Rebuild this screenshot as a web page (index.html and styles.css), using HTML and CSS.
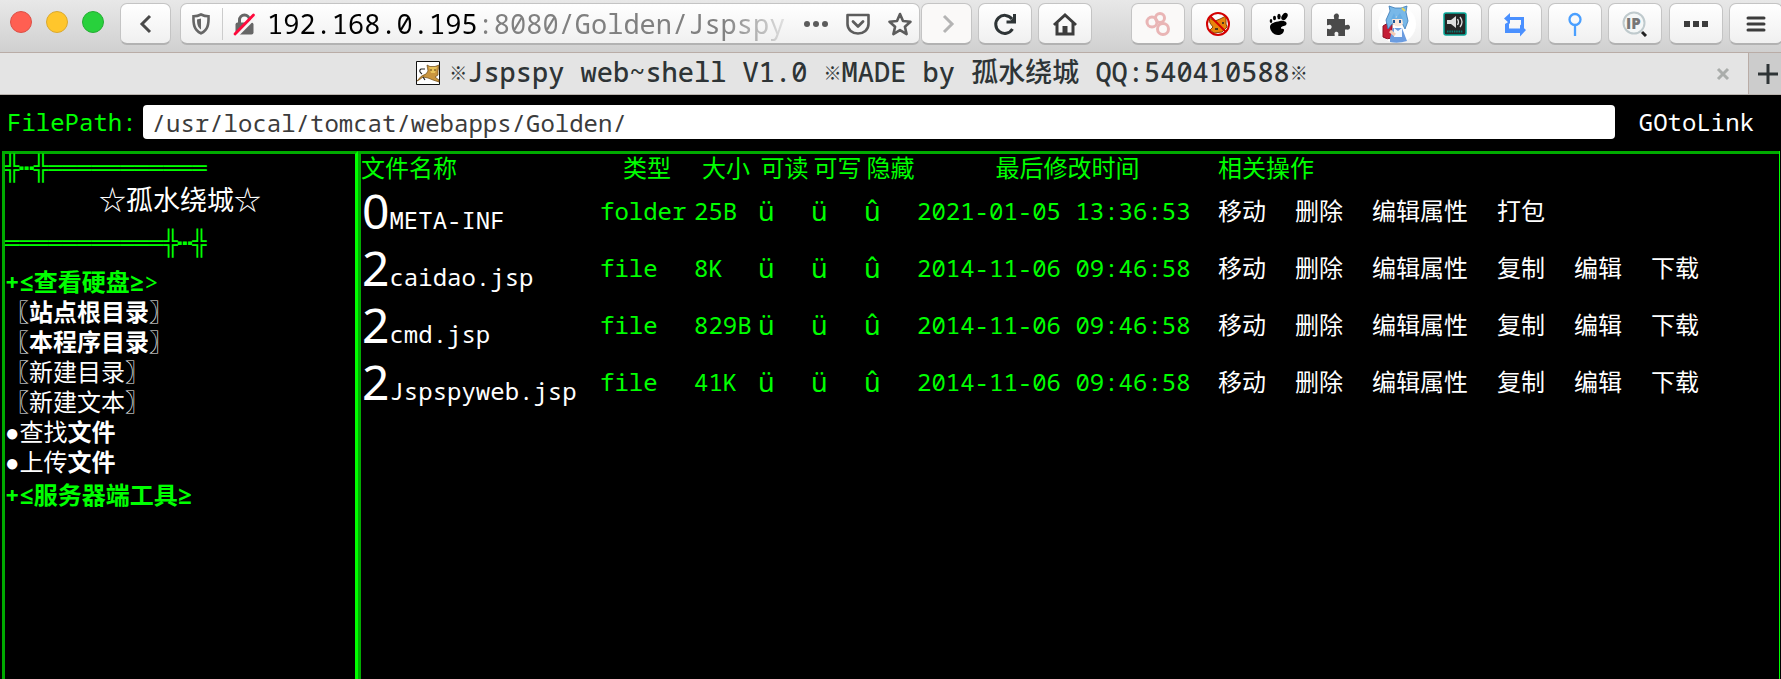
FILE: index.html
```html
<!DOCTYPE html>
<html lang="zh-CN">
<head>
<meta charset="utf-8">
<title>※Jspspy web~shell V1.0 ※MADE by 孤水绕城 QQ:540410588※</title>
<link rel="stylesheet" href="styles.css">
</head>
<body>
<header class="toolbar">
  <div class="lights"><span class="light red"></span><span class="light yellow"></span><span class="light green"></span></div>
  <button class="btn back" aria-label="Back"><svg width="24" height="24" viewBox="0 0 24 24"><path d="M16 4 8 12l8 8" fill="none" stroke="#4a4a4a" stroke-width="3"/></svg></button>
  <div class="urlbar">
    <button class="plain" aria-label="Protection"><svg width="20" height="22" viewBox="0 0 20 22"><path d="M10 1.5C13 3 15.500 3.300 17.500 3.300 17.800 11 17 17 10 20.300 3 17 2.200 11 2.500 3.300 4.500 3.300 7 3 10 1.500Z" fill="none" stroke="#666" stroke-width="2.600"/><path d="M10 5.500v11C7 14.500 6 12 6 6.500Z" fill="#666"/></svg></button>
    <span class="divider"></span>
    <button class="plain lock" aria-label="Connection not secure"><svg width="24" height="24" viewBox="0 0 24 24"><path d="M6.500 11V8a5 5 0 0 1 10 0v3" fill="none" stroke="#666" stroke-width="3"/><rect x="2.500" y="10.500" width="18" height="12" rx="2" fill="#666"/><path d="M3.500 24 23.500 4" stroke="#f5f5f5" stroke-width="3"/><path d="M2 22 20.500 3" stroke="#ff0a3c" stroke-width="2.800" stroke-linecap="round"/></svg></button>
    <div class="url" role="textbox" aria-label="Address" contenteditable="true" spellcheck="false"><span class="host">192.168.0.195</span>:8080/Golden/Jspspy</div>
    <button class="plain" aria-label="Page actions"><svg width="26" height="24" viewBox="0 0 26 24" fill="#5c5c5c"><circle cx="4" cy="12" r="3"/><circle cx="13" cy="12" r="3"/><circle cx="22" cy="12" r="3"/></svg></button>
    <button class="plain pocket" aria-label="Save to Pocket"><svg width="26" height="24" viewBox="0 0 26 24" fill="none" stroke="#5c5c5c"><path d="M2.500 3h21v9c0 6-5 9.500-10.500 9.500S2.500 18 2.500 12Z" stroke-width="2.600" stroke-linejoin="round"/><path d="m8 9.500 5 5 5-5" stroke-width="2.800" stroke-linecap="round" stroke-linejoin="round"/></svg></button>
    <button class="plain" aria-label="Bookmark"><svg width="26" height="26" viewBox="0 0 26 26"><path d="m13 3 3 7 7.500.7-5.600 5 1.700 7.400-6.600-4-6.600 4 1.700-7.400-5.600-5L10 10Z" fill="none" stroke="#5c5c5c" stroke-width="2.600" stroke-linejoin="round"/></svg></button>
  </div>
  <button class="btn forward dim" aria-label="Forward"><svg width="24" height="24" viewBox="0 0 24 24"><path d="m9 4 8 8-8 8" fill="none" stroke="#b4b4b4" stroke-width="3"/></svg></button>
  <div class="group">
    <button class="btn" aria-label="Reload"><svg width="24" height="24" viewBox="0 0 24 24"><path d="M19.500 17A9 9 0 1 1 19 7" fill="none" stroke="#2e3436" stroke-width="3"/><path d="M23 2v9.500h-9.500v-3h4L20 6V2Z" fill="#2e3436"/></svg></button>
    <button class="btn" aria-label="Home"><svg width="26" height="24" viewBox="0 0 26 24"><path d="M2 13 13 3l11 10" fill="none" stroke="#3c3c3c" stroke-width="3"/><path d="M5 11v11h16V11" fill="none" stroke="#3c3c3c" stroke-width="3"/><path d="M10.500 14h5v8h-5z" fill="#3c3c3c"/></svg></button>
  </div>
  <div class="group extensions">
    <button class="btn dim" aria-label="Containers"><svg width="26" height="26" viewBox="0 0 26 26" fill="none" stroke="#e9b5b5" stroke-width="3"><circle cx="7" cy="11" r="5"/><circle cx="15" cy="7" r="4.500"/><circle cx="18" cy="18" r="5.500"/></svg></button>
    <button class="btn" aria-label="Fox blocker"><svg width="26" height="26" viewBox="0 0 26 26"><path d="M4 7l6 3 5-2 6-3v8l1 3-5 5-8 1-4-3 3-3-3-4Z" fill="#e8850c" stroke="#8a4a08"/><path d="M10 18h3M17 12h2" stroke="#222" stroke-width="1.500"/><circle cx="13" cy="13" r="11" fill="none" stroke="#d40000" stroke-width="2"/><path d="m5 5 16 16" stroke="#d40000" stroke-width="2"/></svg></button>
    <button class="btn" aria-label="Gnome"><svg width="26" height="26" viewBox="0 0 26 26"><path d="M15 10c5-1 8 2 6 4-1.500 1.500-5 1-5 3 0 1.500 3 0 3 2 0 3-3 5-6 5-5 0-8-5-8-8 0-4 5-5 10-6Z"/><ellipse cx="19.500" cy="5.500" rx="2.600" ry="4" transform="rotate(35 19.500 5.500)"/><ellipse cx="14" cy="5.500" rx="1.700" ry="2.700"/><ellipse cx="9.500" cy="7" rx="1.500" ry="2.300"/><ellipse cx="6" cy="10" rx="1.300" ry="2"/></svg></button>
    <button class="btn" aria-label="Add-ons"><svg width="26" height="26" viewBox="0 0 26 26"><path d="M2 8h7c.8-1-.8-2 0-4 1.300-2.200 4.200-2 4.800 0 .6 1.800-.8 3 0 4H20v6c1 .8 2-.8 3.700 0 2 1.200 1.600 4-.2 4.500-1.500.5-2.500-.5-3.500.2V25h-6.500c-.8-1 .4-2-.3-3.300-1-1.300-3-1-3.600.3-.5 1.200.5 2 0 3H2v-7c1-.8 2 .7 3.500 0 1.700-1.200 1.400-3.300 0-4-1.500-.6-2.500.6-3.500 0Z" fill="#4a4a4a"/></svg></button>
    <button class="btn avatar" aria-label="Profile"><svg width="38" height="38" viewBox="0 0 38 38"><circle cx="19" cy="19" r="19" fill="#fff"/><path d="M5 21q4-4 9-2v14q-5 2-9-1Z" fill="#c51d35" stroke="#8d1426"/><path d="m12 33 3-10h9l5 13q-9 3-17 1Z" fill="#6b9ce0"/><path d="M12 6 11 1l6 2h6l6-2-1 6 2 9-3 8-3-6-10 1-4 5-2-9Z" fill="#78b8e8" stroke="#3b78b5" stroke-width=".8"/><path d="M14 13q5-3 10 0l1 6q-5 5-10 0Z" fill="#fbe6d8"/><path d="m13 14 3-6 2 5 4-5 3 6" fill="#68aee4"/><path d="M16 15v3M22 15v3" stroke="#245796" stroke-width="2"/><path d="m16 23 4 3 4-3v9h-8Z" fill="#f2f7ff"/><path d="m12 26 5 4" stroke="#f3cbb5" stroke-width="3"/><path d="m24 3 3 3" stroke="#e7d75c" stroke-width="2"/></svg></button>
    <button class="btn" aria-label="Audio booster"><svg width="24" height="24" viewBox="0 0 24 24"><rect x="1" y="1" width="22" height="22" rx="2" fill="#252525" stroke="#08a99a" stroke-width="1.500"/><path d="M4 8h4l5-4v12l-5-4H4Z" fill="#ddd"/><path d="M14.500 7q2 3 0 6M17 5q4 5 0 10" fill="none" stroke="#ddd" stroke-width="1.300"/><path d="M4 19.500h16" stroke="#087a72" stroke-width="2" stroke-dasharray="1.500 .8"/></svg></button>
    <button class="btn" aria-label="Proxy switch"><svg width="24" height="26" viewBox="0 0 24 26" fill="#4a90ff"><path d="M1 7.500 7 2v4h14v11h-3V9H7v4Z"/><path d="m23 19-6-5.500v4H6v-7L2 13v9h15v3.500Z"/></svg></button>
    <button class="btn" aria-label="Pin"><svg width="24" height="26" viewBox="0 0 24 26" fill="none" stroke="#4a9fff" stroke-width="2.300"><circle cx="12" cy="8.500" r="5.500"/><path d="M12 14v11"/></svg></button>
    <button class="btn" aria-label="IP lookup"><svg width="26" height="26" viewBox="0 0 26 26"><circle cx="12" cy="12" r="10.500" fill="#f4f7f7" stroke="#bfcacd" stroke-width="2"/><text class="ip" x="4" y="18">IP</text><path d="m20 21 4 4" stroke="#222" stroke-width="3"/></svg></button>
    <button class="btn more" aria-label="More tools"><svg width="26" height="24" viewBox="0 0 26 24" fill="#3c3c3c"><path d="M1 9h6v6H1zM10 9h6v6h-6zM19 9h6v6h-6z"/></svg></button>
    <button class="btn" aria-label="Menu"><svg width="20" height="20" viewBox="0 0 20 20"><path d="M2 4h16M2 10h16M2 16h16" stroke="#3c3c3c" stroke-width="3" stroke-linecap="round"/></svg></button>
  </div>
</header>
<nav class="tabs">
  <div class="tab">
    <svg width="24" height="24" viewBox="0 0 24 24"><path d="M.5.5h23v23H.5z" fill="#fff" stroke="#111"/><path d="M1 20q4-6 9-7l2-3-1-6 3 1.500h5l4-1.500-1 6v4l-3 2 4 3v2l-6-2-5-2-5-1-4 3Z" fill="#c9953f" stroke="#6b4a17" stroke-width=".7"/><path d="m13 6 2 6h4l2-6" fill="#e8c25b"/><path d="M15 8v2M19 8v2" stroke="#5a3c10"/><path d="M6 13q-4-3-1-5h4M7 16l2 3" fill="none" stroke="#222" stroke-width="1.200"/></svg>
    <span class="title"><span class="mark">※</span>Jspspy web~shell V1.0 <span class="mark">※</span>MADE by 孤水绕城 QQ:540410588<span class="mark">※</span></span>
  </div>
  <button class="plain close" aria-label="Close tab"><svg width="14" height="14" viewBox="0 0 14 14"><path d="m2 2 10 10M12 2 2 12" stroke="#aaadab" stroke-width="3"/></svg></button>
  <button class="plain newtab" aria-label="New tab"><svg width="22" height="22" viewBox="0 0 22 22"><path d="M11 1v20M1 11h20" stroke="#2e3436" stroke-width="3"/></svg></button>
</nav>
<form class="pathbar">
  <label for="path">FilePath:</label>
  <input id="path" type="text" value="/usr/local/tomcat/webapps/Golden/">
  <button type="button" class="plain go">GOtoLink</button>
</form>
<main class="frames">
  <aside class="side">
    <div class="rule">╬<b>┅</b>╬═══════════</div>
    <div class="brand"><span class="star">☆</span>孤水绕城<span class="star">☆</span></div>
    <div class="rule lower">═══════════╬<b>┅</b>╬</div>
    <div class="section"><b>+≤查看硬盘≥</b>&gt;</div>
    <ul class="menu">
      <li><a href="#"><b>〖站点根目录〗</b></a></li>
      <li><a href="#"><b>〖本程序目录〗</b></a></li>
      <li><a href="#">〖新建目录〗</a></li>
      <li><a href="#">〖新建文本〗</a></li>
      <li><a href="#">●查找<b>文件</b></a></li>
      <li><a href="#">●上传<b>文件</b></a></li>
    </ul>
    <div class="section"><b>+≤服务器端工具≥</b></div>
  </aside>
  <section class="content">
    <table class="files">
      <colgroup><col class="c-name"><col class="c-type"><col class="c-size"><col class="c-flag"><col class="c-flag"><col class="c-flag"><col class="c-time"><col></colgroup>
      <thead><tr><th class="left">文件名称</th><th>类型</th><th>大小</th><th>可读</th><th>可写</th><th>隐藏</th><th>最后修改时间</th><th class="left">相关操作</th></tr></thead>
      <tbody>
        <tr><td class="name"><a href="#"><span class="glyph">0</span>META-INF</a></td><td>folder</td><td>25B</td><td class="flag">ü</td><td class="flag">ü</td><td class="flag">û</td><td>2021-01-05 13:36:53</td><td class="ops"><a href="#">移动</a><a href="#">删除</a><a href="#">编辑属性</a><a href="#">打包</a></td></tr>
        <tr><td class="name"><a href="#"><span class="glyph">2</span>caidao.jsp</a></td><td>file</td><td>8K</td><td class="flag">ü</td><td class="flag">ü</td><td class="flag">û</td><td>2014-11-06 09:46:58</td><td class="ops"><a href="#">移动</a><a href="#">删除</a><a href="#">编辑属性</a><a href="#">复制</a><a href="#">编辑</a><a href="#">下载</a></td></tr>
        <tr><td class="name"><a href="#"><span class="glyph">2</span>cmd.jsp</a></td><td>file</td><td>829B</td><td class="flag">ü</td><td class="flag">ü</td><td class="flag">û</td><td>2014-11-06 09:46:58</td><td class="ops"><a href="#">移动</a><a href="#">删除</a><a href="#">编辑属性</a><a href="#">复制</a><a href="#">编辑</a><a href="#">下载</a></td></tr>
        <tr><td class="name"><a href="#"><span class="glyph">2</span>Jspspyweb.jsp</a></td><td>file</td><td>41K</td><td class="flag">ü</td><td class="flag">ü</td><td class="flag">û</td><td>2014-11-06 09:46:58</td><td class="ops"><a href="#">移动</a><a href="#">删除</a><a href="#">编辑属性</a><a href="#">复制</a><a href="#">编辑</a><a href="#">下载</a></td></tr>
      </tbody>
    </table>
  </section>
</main>
</body>
</html>
```
FILE: styles.css
```css
:root {
  --mono: "Noto Sans Mono", "DejaVu Sans Mono", "Noto Sans CJK SC", monospace;
  --cjk: "Noto Sans CJK SC", sans-serif;
  --lime: #00ff00;
  --green: #00ab00;
}
* { box-sizing: border-box; }
body {
  margin: 0;
  min-height: 100vh;
  display: flex;
  flex-direction: column;
  background: #000;
  color: #fff;
  font: 24px/30px var(--mono);
  overflow: hidden;
}
a { color: #fff; text-decoration: none; }
button { font: inherit; cursor: pointer; }
svg { display: block; flex: none; }

.toolbar {
  display: flex;
  align-items: flex-start;
  height: 53px;
  padding: 3px 0 0 10px;
  background: linear-gradient(#e8e8e8, #d0d0d0);
  border-bottom: 1px solid #b9aca6;
  overflow: hidden;
}
.lights { display: flex; gap: 14px; padding: 8px 16px 0 0; }
.light { width: 22px; height: 22px; border-radius: 50%; border: 1px solid; }
.red { background: #ff5f52; border-color: #dc5047; }
.yellow { background: #ffc62c; border-color: #dba92e; }
.green { background: #28d13c; border-color: #25ad34; }
.btn {
  flex: none;
  display: flex;
  align-items: center;
  justify-content: center;
  width: 54px;
  height: 42px;
  padding: 0;
  border: 1px solid #c4c4c4;
  border-bottom: 2px solid #b2b2b2;
  border-radius: 7px;
  background: linear-gradient(#fff, #f0f0f0);
}
.back, .forward, .avatar { width: 51px; }
.dim { background: #faf9f8; }
.plain {
  flex: none;
  display: flex;
  align-items: center;
  justify-content: center;
  padding: 0;
  border: 0;
  background: none;
  color: inherit;
}
.urlbar {
  flex: 1;
  min-width: 0;
  display: flex;
  align-items: center;
  height: 42px;
  margin-left: 9px;
  padding: 0 6px 0 10px;
  border: 1px solid #c4c4c4;
  border-bottom: 2px solid #b2b2b2;
  border-radius: 7px;
  background: linear-gradient(#fff, #f0f0f0);
}
.divider { flex: none; width: 1px; height: 32px; margin: 0 10px 0 11px; background: #ccc; }
.url {
  flex: 1;
  min-width: 0;
  margin-left: 10px;
  overflow: hidden;
  white-space: nowrap;
  font-size: 27px;
  line-height: 36px;
  color: #808080;
  outline: 0;
  -webkit-mask-image: linear-gradient(to right, #000 calc(100% - 80px), transparent calc(100% - 4px));
  mask-image: linear-gradient(to right, #000 calc(100% - 80px), transparent calc(100% - 4px));
}
.host { color: #000; }
.pocket { margin: 0 16px; }
.forward { margin-left: 1px; }
.group { display: flex; gap: 6px; margin-left: 6px; }
.extensions { margin-left: 39px; margin-right: -2px; }
.more { margin-left: 1px; }
.ip { font: 900 15px "Open Sans", sans-serif; fill: #777; }

.tabs {
  display: flex;
  height: 42px;
  background: #e4e4e4;
  border-bottom: 1px solid #b9b3af;
  color: #2e3436;
}
.tab {
  flex: 1;
  display: flex;
  align-items: center;
  justify-content: center;
  gap: 9px;
  padding: 0 0 2px 8px;
}
.title { padding-bottom: 2px; font-size: 27px; line-height: 36px; font-weight: 500; white-space: nowrap; }
.mark { font-family: var(--cjk); font-size: 18px; line-height: 24px; vertical-align: 2px; }
.close { margin-right: 18px; }
.newtab { width: 33px; padding-left: 6px; background: #ccc; border-left: 1px solid #b9aca6; }

.pathbar {
  display: flex;
  align-items: center;
  height: 56px;
  margin: 0;
  padding: 0 27px 2px 7px;
  color: var(--lime);
}
.pathbar input {
  flex: 1;
  min-width: 0;
  height: 34px;
  margin: 0 24px 0 6px;
  padding: 0 9px;
  border: 0;
  border-radius: 4px;
  background: #fff;
  color: #3c3c3c;
  font: inherit;
}
.go { color: #fff; }

.frames {
  flex: 1;
  display: flex;
  margin: 0 1px 0 2px;
  border-right: 1px solid var(--lime);
}
.side, .content { border: solid var(--green); border-width: 3px 0 0 3px; }
.side { flex: none; width: 356px; border-right: 3px solid var(--lime); }
.content { flex: 1; min-width: 0; }
.rule { line-height: 28px; color: var(--lime); white-space: nowrap; }
.brand { height: 36px; font-size: 27px; line-height: 34px; text-align: center; }
.star { font-family: var(--cjk); }
.lower { margin: 11px 0 8px; }
.section { line-height: 34px; color: var(--lime); }
.menu { margin: -2px 0 1px; padding: 0; list-style: none; }

.files { width: 100%; table-layout: fixed; border-collapse: collapse; color: var(--lime); }
.files th, .files td { padding: 0; font-weight: 400; text-align: left; white-space: nowrap; }
.files th { line-height: 28px; text-align: center; }
.files th.left { text-align: left; }
.files td { height: 57px; vertical-align: middle; }
.files .name { padding-left: 1px; }
.c-name { width: 239px; }
.c-type { width: 94px; }
.c-size { width: 64px; }
.c-flag { width: 53px; }
.c-time { width: 301px; }
.files .flag { font: 27px/30px "Noto Sans", sans-serif; }
.ops a { margin-right: 29px; }
.glyph { font: 48px/52px "Noto Sans", sans-serif; }
```
